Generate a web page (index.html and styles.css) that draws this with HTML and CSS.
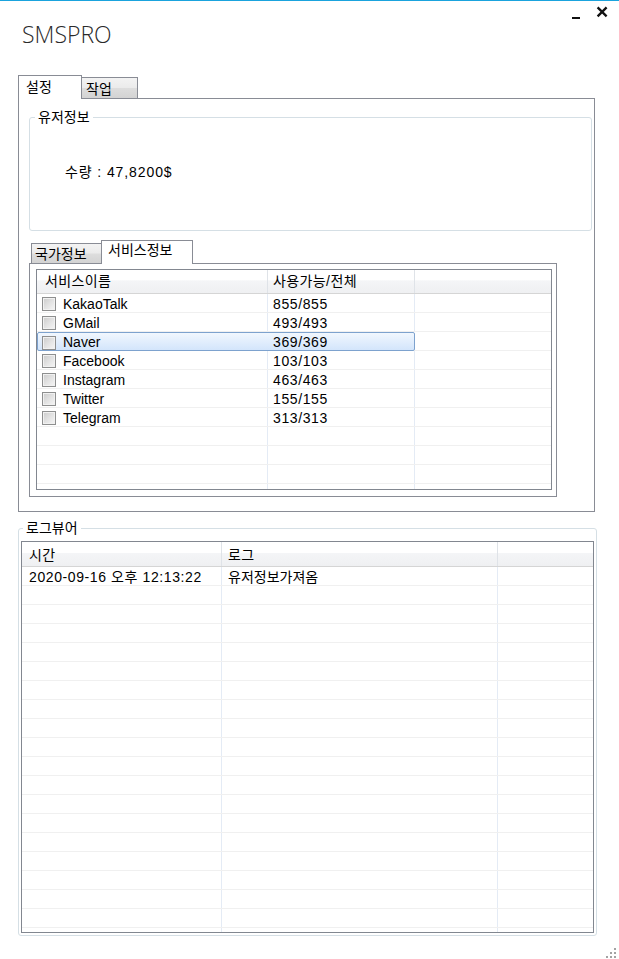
FILE: index.html
```html
<!DOCTYPE html>
<html lang="ko">
<head>
<meta charset="utf-8">
<title>SMSPRO</title>
<link rel="stylesheet" href="styles.css">
</head>
<body>
<div class="window">
  <header class="titlebar">
    <h1 class="title">SMSPRO</h1>
    <div class="controls">
      <svg width="40" height="14" viewBox="0 0 40 14" aria-hidden="true">
        <rect x="2" y="11" width="8" height="2" fill="#111"/>
        <path d="M27.6 1.4 L36.6 10.4 M36.6 1.4 L27.6 10.4" stroke="#111" stroke-width="2.3" fill="none"/>
      </svg>
    </div>
  </header>

  <div class="tabctl outer">
    <div class="tabstrip">
      <div class="tab active t-settings">설정</div>
      <div class="tab t-work">작업</div>
    </div>
    <div class="tabpanel outer-panel">
      <fieldset class="group user-group">
        <legend>유저정보</legend>
        <div class="group-body">
          <p class="amount">수량 : 47,8200$</p>
        </div>
      </fieldset>

      <div class="tabctl inner">
        <div class="tabstrip">
          <div class="tab t-country">국가정보</div>
          <div class="tab active t-service">서비스정보</div>
        </div>
        <div class="tabpanel inner-panel">
          <div class="listview services">
            <div class="lv-head">
              <div class="hc c1">서비스이름</div>
              <div class="hc c2">사용가능/전체</div>
              <div class="hc c3"></div>
            </div>
            <div class="lv-body">
              <div class="row"><div class="cell c1"><span class="cb"></span>KakaoTalk</div><div class="cell c2 num">855/855</div><div class="cell c3"></div></div>
              <div class="row"><div class="cell c1"><span class="cb"></span>GMail</div><div class="cell c2 num">493/493</div><div class="cell c3"></div></div>
              <div class="row sel"><div class="selbox"><div class="cell c1"><span class="cb"></span>Naver</div><div class="cell c2 num">369/369</div></div><div class="cell c3"></div></div>
              <div class="row"><div class="cell c1"><span class="cb"></span>Facebook</div><div class="cell c2 num">103/103</div><div class="cell c3"></div></div>
              <div class="row"><div class="cell c1"><span class="cb"></span>Instagram</div><div class="cell c2 num">463/463</div><div class="cell c3"></div></div>
              <div class="row"><div class="cell c1"><span class="cb"></span>Twitter</div><div class="cell c2 num">155/155</div><div class="cell c3"></div></div>
              <div class="row"><div class="cell c1"><span class="cb"></span>Telegram</div><div class="cell c2 num">313/313</div><div class="cell c3"></div></div>
              <div class="row"><div class="cell c1"></div><div class="cell c2"></div><div class="cell c3"></div></div>
              <div class="row"><div class="cell c1"></div><div class="cell c2"></div><div class="cell c3"></div></div>
              <div class="row"><div class="cell c1"></div><div class="cell c2"></div><div class="cell c3"></div></div>
              <div class="row"><div class="cell c1"></div><div class="cell c2"></div><div class="cell c3"></div></div>
            </div>
          </div>
        </div>
      </div>
    </div>
  </div>

  <fieldset class="group log-group">
    <legend>로그뷰어</legend>
    <div class="listview logs">
      <div class="lv-head">
        <div class="hc c1">시간</div>
        <div class="hc c2">로그</div>
        <div class="hc c3"></div>
      </div>
      <div class="lv-body">
        <div class="row"><div class="cell c1 num">2020-09-16 오후 12:13:22</div><div class="cell c2">유저정보가져옴</div><div class="cell c3"></div></div>
        <div class="row"><div class="cell c1"></div><div class="cell c2"></div><div class="cell c3"></div></div>
        <div class="row"><div class="cell c1"></div><div class="cell c2"></div><div class="cell c3"></div></div>
        <div class="row"><div class="cell c1"></div><div class="cell c2"></div><div class="cell c3"></div></div>
        <div class="row"><div class="cell c1"></div><div class="cell c2"></div><div class="cell c3"></div></div>
        <div class="row"><div class="cell c1"></div><div class="cell c2"></div><div class="cell c3"></div></div>
        <div class="row"><div class="cell c1"></div><div class="cell c2"></div><div class="cell c3"></div></div>
        <div class="row"><div class="cell c1"></div><div class="cell c2"></div><div class="cell c3"></div></div>
        <div class="row"><div class="cell c1"></div><div class="cell c2"></div><div class="cell c3"></div></div>
        <div class="row"><div class="cell c1"></div><div class="cell c2"></div><div class="cell c3"></div></div>
        <div class="row"><div class="cell c1"></div><div class="cell c2"></div><div class="cell c3"></div></div>
        <div class="row"><div class="cell c1"></div><div class="cell c2"></div><div class="cell c3"></div></div>
        <div class="row"><div class="cell c1"></div><div class="cell c2"></div><div class="cell c3"></div></div>
        <div class="row"><div class="cell c1"></div><div class="cell c2"></div><div class="cell c3"></div></div>
        <div class="row"><div class="cell c1"></div><div class="cell c2"></div><div class="cell c3"></div></div>
        <div class="row"><div class="cell c1"></div><div class="cell c2"></div><div class="cell c3"></div></div>
        <div class="row"><div class="cell c1"></div><div class="cell c2"></div><div class="cell c3"></div></div>
        <div class="row"><div class="cell c1"></div><div class="cell c2"></div><div class="cell c3"></div></div>
        <div class="row"><div class="cell c1"></div><div class="cell c2"></div><div class="cell c3"></div></div>
        <div class="row"><div class="cell c1"></div><div class="cell c2"></div><div class="cell c3"></div></div>
      </div>
    </div>
  </fieldset>

  <div class="grip">
    <svg width="12" height="12" viewBox="0 0 12 12" aria-hidden="true">
      <g fill="#a3a3a3">
        <rect x="9" y="1" width="2" height="2"/>
        <rect x="5" y="5" width="2" height="2"/>
        <rect x="9" y="5" width="2" height="2"/>
        <rect x="1" y="9" width="2" height="2"/>
        <rect x="5" y="9" width="2" height="2"/>
        <rect x="9" y="9" width="2" height="2"/>
      </g>
    </svg>
  </div>
</div>
</body>
</html>
```

FILE: styles.css
```css
* { box-sizing: border-box; }

html, body {
  margin: 0;
  padding: 0;
  background: #fff;
}

body {
  font-family: "Liberation Sans", "Noto Sans CJK KR", sans-serif;
  font-size: 14px;
  color: #000;
}

.window {
  width: 619px;
  height: 959px;
  border-top: 1px solid #1aa3dd;
  overflow: hidden;
}

/* ---------- title bar ---------- */
.titlebar {
  display: flex;
  height: 74px;
}

.title {
  margin: 0;
  padding: 17px 0 0 22px;
  font-family: "Open Sans", sans-serif;
  font-weight: 300;
  font-size: 23px;
  line-height: 32px;
  color: #2a2a2a;
}

.controls {
  margin-left: auto;
  padding: 5px 9px 0 0;
}

.controls svg { display: block; }

/* ---------- tabs ---------- */
.tabctl.outer {
  margin-left: 18px;
  width: 577px;
}

.tabctl.inner {
  margin-top: 9px;
  width: 528px;
}

.tabstrip {
  display: flex;
  align-items: flex-end;
  height: 23px;
}

.tab {
  border: 1px solid #898c95;
  border-bottom: 0;
  line-height: 16px;
  white-space: nowrap;
}

.tab.active {
  position: relative;
  z-index: 1;
  height: 24px;
  margin-bottom: -1px;
  background: #fff;
}

.tab:not(.active) {
  background: linear-gradient(#f3f3f3 0%, #ebebeb 48%, #dddddd 52%, #d3d3d3 100%);
}

.t-settings {
  width: 64px;
  padding: 3px 0 0 7px;
}

.t-work {
  width: 57px;
  height: 21px;
  margin-left: -1px;
  padding: 3px 0 0 4px;
}

.t-country {
  width: 71px;
  height: 20px;
  margin-left: 2px;
  padding: 2px 0 0 3px;
}

.t-service {
  width: 92px;
  margin-left: -1px;
  padding: 1px 0 0 6px;
}

.tabpanel {
  border: 1px solid #898c95;
  background: #fff;
}

.outer-panel {
  height: 414px;
  padding: 10px 0 0 10px;
}

.inner-panel {
  height: 234px;
  padding: 5px 4px 0 6px;
}

/* ---------- group boxes ---------- */
.group {
  margin: 0;
  min-width: 0;
  border: 1px solid #d5dfe5;
  border-radius: 3px;
}

.group legend {
  padding: 0 3px;
  line-height: 16px;
}

.user-group {
  width: 563px;
  padding: 0;
}

.user-group legend { margin-left: 5px; }

.group-body {
  padding: 39px 0 50px 35px;
}

.amount {
  margin: 0;
  line-height: 16px;
  letter-spacing: 0.9px;
}

.log-group {
  width: 579px;
  margin: 8px 0 0 18px;
  padding: 5px 2px 2px 2px;
}

.log-group legend { margin-left: 2px; }

/* ---------- list views ---------- */
.listview {
  border: 1px solid #828790;
  background: #fff;
  overflow: hidden;
}

.services {
  width: 516px;
  height: 221px;
}

.logs {
  width: 573px;
  height: 392px;
}

.lv-head {
  display: flex;
  height: 24px;
  border-bottom: 1px solid #d5d5d5;
  background: linear-gradient(#ffffff 0%, #ffffff 45%, #f4f5f7 46%, #eff0f2 100%);
}

.logs .lv-head { height: 25px; }

.hc {
  line-height: 23px;
  white-space: nowrap;
  letter-spacing: 0.4px;
}

.logs .hc { padding-top: 2px; }

.hc.c1, .hc.c2 { border-right: 1px solid #dfe3e8; }

.row {
  display: flex;
  height: 19px;
  border-bottom: 1px solid #f0f0f0;
}

.cell {
  padding-top: 2px;
  line-height: 16px;
  white-space: nowrap;
  overflow: hidden;
}

.c3 { flex: 1; }

.num { letter-spacing: 0.6px; }

.services .c1 { width: 231px; padding-left: 8px; }
.services .c2 { width: 147px; padding-left: 5px; }
.services .cell.c1 { padding-left: 5px; display: flex; align-items: flex-start; }

.logs .c1 { width: 200px; padding-left: 7px; }
.logs .c2 { width: 276px; padding-left: 6px; }

.cell.c1, .cell.c2 { border-right: 1px solid #e4ebf5; }

.cb {
  flex: none;
  width: 14px;
  height: 14px;
  margin: 1px 7px 0 0;
  border: 1px solid #8e8f8f;
  background: linear-gradient(135deg, #cbcbcb 0%, #e2e2e2 50%, #f6f6f6 100%);
  box-shadow: inset 0 0 0 1px #f1f1f1;
}

/* selected row */
.selbox {
  display: flex;
  flex: none;
  align-self: flex-start;
  width: 378px;
  height: 19px;
  margin-bottom: -1px;
  border: 1px solid #7da2ce;
  border-radius: 2px;
  background: linear-gradient(#f1f7fe, #d3e5fb);
}

.selbox .cell.c1 {
  width: 230px;
  padding-left: 4px;
  padding-top: 1px;
  border-right: 0;
}

.selbox .cell.c2 {
  width: 146px;
  padding-top: 1px;
  border-right: 0;
}

.selbox .cb { margin-top: 2px; }

/* ---------- resize grip ---------- */
.grip {
  display: flex;
  justify-content: flex-end;
  margin-top: 11px;
  padding-right: 2px;
}

.grip svg { display: block; }
```
